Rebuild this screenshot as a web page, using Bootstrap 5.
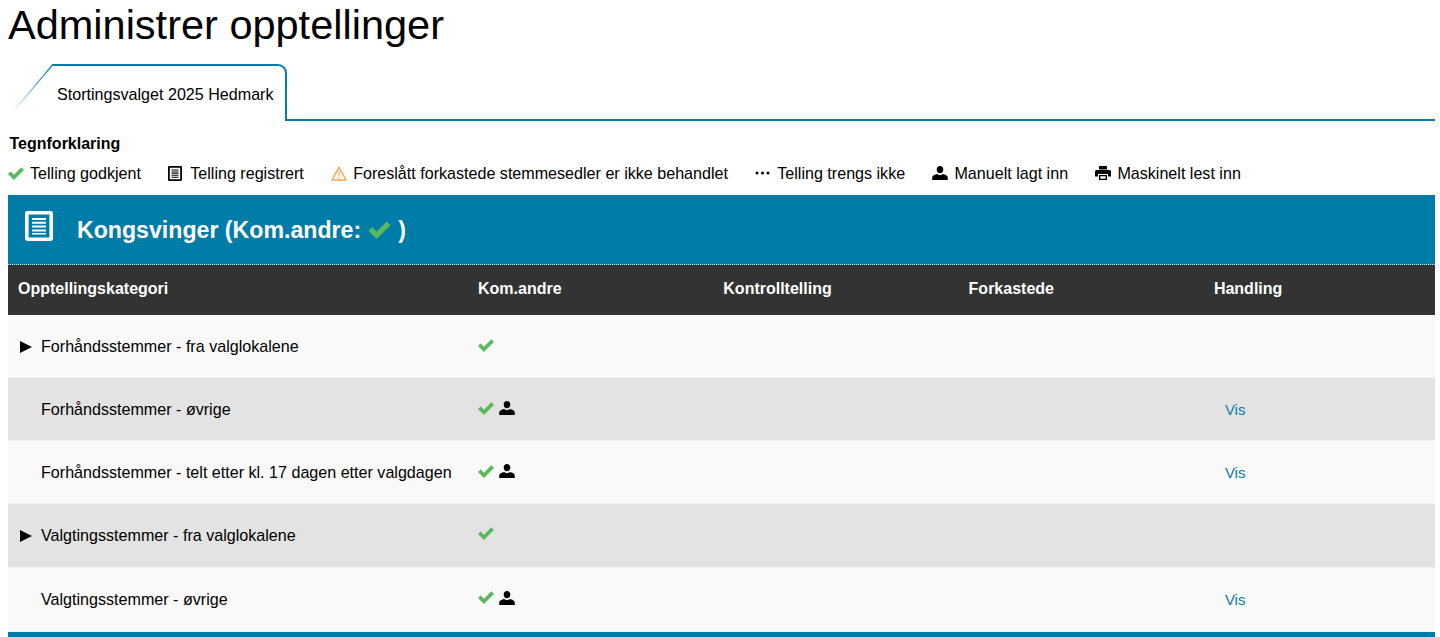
<!DOCTYPE html>
<html lang="no">
<head>
<meta charset="utf-8">
<title>Administrer opptellinger</title>
<link href="https://cdn.jsdelivr.net/npm/bootstrap@5.3.0/dist/css/bootstrap.min.css" rel="stylesheet">
<style>
html,body{height:637px;overflow:hidden}
body{font-family:"Liberation Sans",Arial,sans-serif;font-size:16.1px;color:#000;background:#fff;padding:0 5px 0 8px}
.page-title{font-size:41.500px;line-height:47px;font-weight:400;margin:0;height:64px;padding-top:1px}
.tab-strip{height:57px;border-bottom:2px solid #0a7ca8}
.tab-item{position:relative;height:57px;width:279px;background:#fff}
.tab-slant{position:absolute;left:0;top:0}
.tab-box{position:absolute;left:44px;top:0;right:0;height:57px;border:2px solid #0a7ca8;border-left:0;border-bottom:0;border-top-right-radius:9px}
.tab-label{position:absolute;left:49px;top:21px;line-height:18px;white-space:nowrap}
.legend-title{font-weight:700;font-size:16px;line-height:18px;margin:14px 0 0 1.500px}
.legend-row{height:42px;gap:27.300px;padding-bottom:2px}
.legend-item{gap:6px;line-height:18px;white-space:nowrap}
.ico-box{width:16px;flex:none;display:flex;justify-content:center}
.ico-box.shift{justify-content:flex-start}
.check{color:#5cb85c}
.panel-head{height:70px;background:#007ca8;color:#fff;border-bottom:1px dotted #cfe3ea;font-size:23.150px;font-weight:700;padding-left:17px}
.panel-head svg.doc{margin-right:24px;margin-top:-7px}
.panel-head .ttl{padding-top:2px}
.panel-head .chk{margin:0 7px 5px 7px;vertical-align:middle}
.tbl{table-layout:fixed;width:100%;margin:0;border-collapse:collapse}
.tbl th{background:#333;color:#fff;height:50px;font-size:16px;font-weight:700;padding:0 10px 2px;vertical-align:middle;border:0}
.tbl td{height:63px;padding:0 10px;vertical-align:middle;border:0;color:#000;font-size:16.1px}
.tbl tr.tall td{height:64px;padding-bottom:2px}
.tbl tr.lt td{background:#f9f9f9;box-shadow:inset 0 -1px 0 #f1f1f1}
.tbl tr.dk td{background:#e3e3e3;box-shadow:inset 0 -1px 0 #f1f1f1}
.w-cat{width:460px}
.w-col{width:245.300px}
.cat-cell{padding-left:33px!important;position:relative}
.caret-tri{position:absolute;left:12px;top:50%;margin-top:-6px;width:0;height:0;border-left:12px solid #000;border-top:6px solid transparent;border-bottom:6px solid transparent}
.marks{gap:5px;margin-top:-3px}
.vis{color:#0a7ca8;text-decoration:none;margin-left:11px;font-size:15px}
.panel-foot{height:6px;background:#007ca8}
</style>
</head>
<body>
<svg width="0" height="0" class="position-absolute">
<defs>
<linearGradient id="fade" x1="1" y1="0" x2="0" y2="1"><stop offset="0" stop-color="#0a7ca8"/><stop offset="1" stop-color="#0a7ca8" stop-opacity="0"/></linearGradient>
<symbol id="i-check" viewBox="0 0 16 13"><path d="M0 7l2.600-2.600 3.300 3.300L13.300.3 16 3 5.900 13z" fill="currentColor"/></symbol>
<symbol id="i-list" viewBox="0 0 14 15"><path fill-rule="evenodd" d="M1.200 0h11.600A1.200 1.200 0 0 1 14 1.200v12.600a1.200 1.200 0 0 1-1.200 1.200H1.200A1.200 1.200 0 0 1 0 13.800V1.200A1.200 1.200 0 0 1 1.200 0zM1.800 1.800v11.400h10.400V1.800z" fill="currentColor"/><path d="M3.500 3.500h7v1h-7zM3.500 5.400h7v1h-7zM3.500 7.300h7v1h-7zM3.500 9.200h7v1h-7zM3.500 11h7v.8h-7z" fill="currentColor"/></symbol>
<symbol id="i-user" viewBox="0 0 16 14"><path d="M8 0c2 0 3.300 1.400 3.300 3.400S10 7.300 8 7.300 4.700 5.400 4.700 3.400 6 0 8 0zM.2 14v-2.200c0-2 2.800-3.400 4.800-3.700 1 .8 2 1.100 3 1.100s2-.3 3-1.100c2 .3 4.800 1.700 4.800 3.700V14z" fill="currentColor"/></symbol>
<symbol id="i-print" viewBox="0 0 16 14"><path fill-rule="evenodd" d="M4 0h8v3.500H4zM1.500 4h13c.8 0 1.500.7 1.500 1.500V10.500h-3V8H3v2.500H0V5.500C0 4.700.7 4 1.500 4zM4 9h8v5H4zM5.400 10.300v2.400h5.200v-2.400z" fill="currentColor"/></symbol>
</defs>
</svg>
<h1 class="page-title">Administrer opptellinger</h1>
<div class="tab-strip">
  <div class="tab-item">
    <svg class="tab-slant" width="46" height="52" viewBox="0 0 46 52"><path d="M44.500 1L4 49" stroke="url(#fade)" stroke-width="1.200" fill="none"/></svg>
    <div class="tab-box"></div>
    <span class="tab-label">Stortingsvalget 2025 Hedmark</span>
  </div>
</div>
<div class="legend-title">Tegnforklaring</div>
<div class="legend-row d-flex align-items-center">
  <span class="legend-item d-flex align-items-center"><span class="ico-box"><svg width="16" height="13" class="check"><use href="#i-check"/></svg></span>Telling godkjent</span>
  <span class="legend-item d-flex align-items-center"><span class="ico-box shift"><svg width="14" height="15"><use href="#i-list"/></svg></span>Telling registrert</span>
  <span class="legend-item d-flex align-items-center"><span class="ico-box"><svg width="16" height="15" viewBox="0 0 16 15"><path d="M8 1.200L15 14H1z" fill="#fff8ee" stroke="#f0a552" stroke-width="1.400" stroke-linejoin="round"/><path d="M7.400 5h1.200l-.2 5h-.8zM7.400 11h1.200v1.200H7.400z" fill="#f0a552"/></svg></span>Foreslått forkastede stemmesedler er ikke behandlet</span>
  <span class="legend-item d-flex align-items-center"><span class="ico-box shift"><svg width="15" height="4" viewBox="0 0 15 4"><circle cx="2" cy="2" r="1.500"/><circle cx="7.500" cy="2" r="1.500"/><circle cx="13" cy="2" r="1.500"/></svg></span>Telling trengs ikke</span>
  <span class="legend-item d-flex align-items-center"><span class="ico-box"><svg width="16" height="14"><use href="#i-user"/></svg></span>Manuelt lagt inn</span>
  <span class="legend-item d-flex align-items-center"><span class="ico-box"><svg width="16" height="14"><use href="#i-print"/></svg></span>Maskinelt lest inn</span>
</div>
<div class="panel-head d-flex align-items-center">
  <svg class="doc" width="28" height="30"><use href="#i-list"/></svg>
  <span class="ttl">Kongsvinger (Kom.andre:<svg class="chk check" width="23" height="18"><use href="#i-check"/></svg>)</span>
</div>
<table class="table tbl">
  <thead>
    <tr><th class="w-cat">Opptellingskategori</th><th class="w-col">Kom.andre</th><th class="w-col">Kontrolltelling</th><th class="w-col">Forkastede</th><th>Handling</th></tr>
  </thead>
  <tbody>
    <tr class="lt"><td class="cat-cell"><span class="caret-tri"></span>Forhåndsstemmer - fra valglokalene</td><td><div class="marks d-flex align-items-center"><svg width="16" height="13" class="check"><use href="#i-check"/></svg></div></td><td></td><td></td><td></td></tr>
    <tr class="dk"><td class="cat-cell">Forhåndsstemmer - øvrige</td><td><div class="marks d-flex align-items-center"><svg width="16" height="13" class="check"><use href="#i-check"/></svg><svg width="16" height="14"><use href="#i-user"/></svg></div></td><td></td><td></td><td><a class="vis" href="#">Vis</a></td></tr>
    <tr class="lt"><td class="cat-cell">Forhåndsstemmer - telt etter kl. 17 dagen etter valgdagen</td><td><div class="marks d-flex align-items-center"><svg width="16" height="13" class="check"><use href="#i-check"/></svg><svg width="16" height="14"><use href="#i-user"/></svg></div></td><td></td><td></td><td><a class="vis" href="#">Vis</a></td></tr>
    <tr class="dk tall"><td class="cat-cell"><span class="caret-tri"></span>Valgtingsstemmer - fra valglokalene</td><td><div class="marks d-flex align-items-center"><svg width="16" height="13" class="check"><use href="#i-check"/></svg></div></td><td></td><td></td><td></td></tr>
    <tr class="lt tall"><td class="cat-cell">Valgtingsstemmer - øvrige</td><td><div class="marks d-flex align-items-center"><svg width="16" height="13" class="check"><use href="#i-check"/></svg><svg width="16" height="14"><use href="#i-user"/></svg></div></td><td></td><td></td><td><a class="vis" href="#">Vis</a></td></tr>
  </tbody>
</table>
<div class="panel-foot"></div>
<script src="https://cdn.jsdelivr.net/npm/bootstrap@5.3.0/dist/js/bootstrap.bundle.min.js"></script>
</body>
</html>
